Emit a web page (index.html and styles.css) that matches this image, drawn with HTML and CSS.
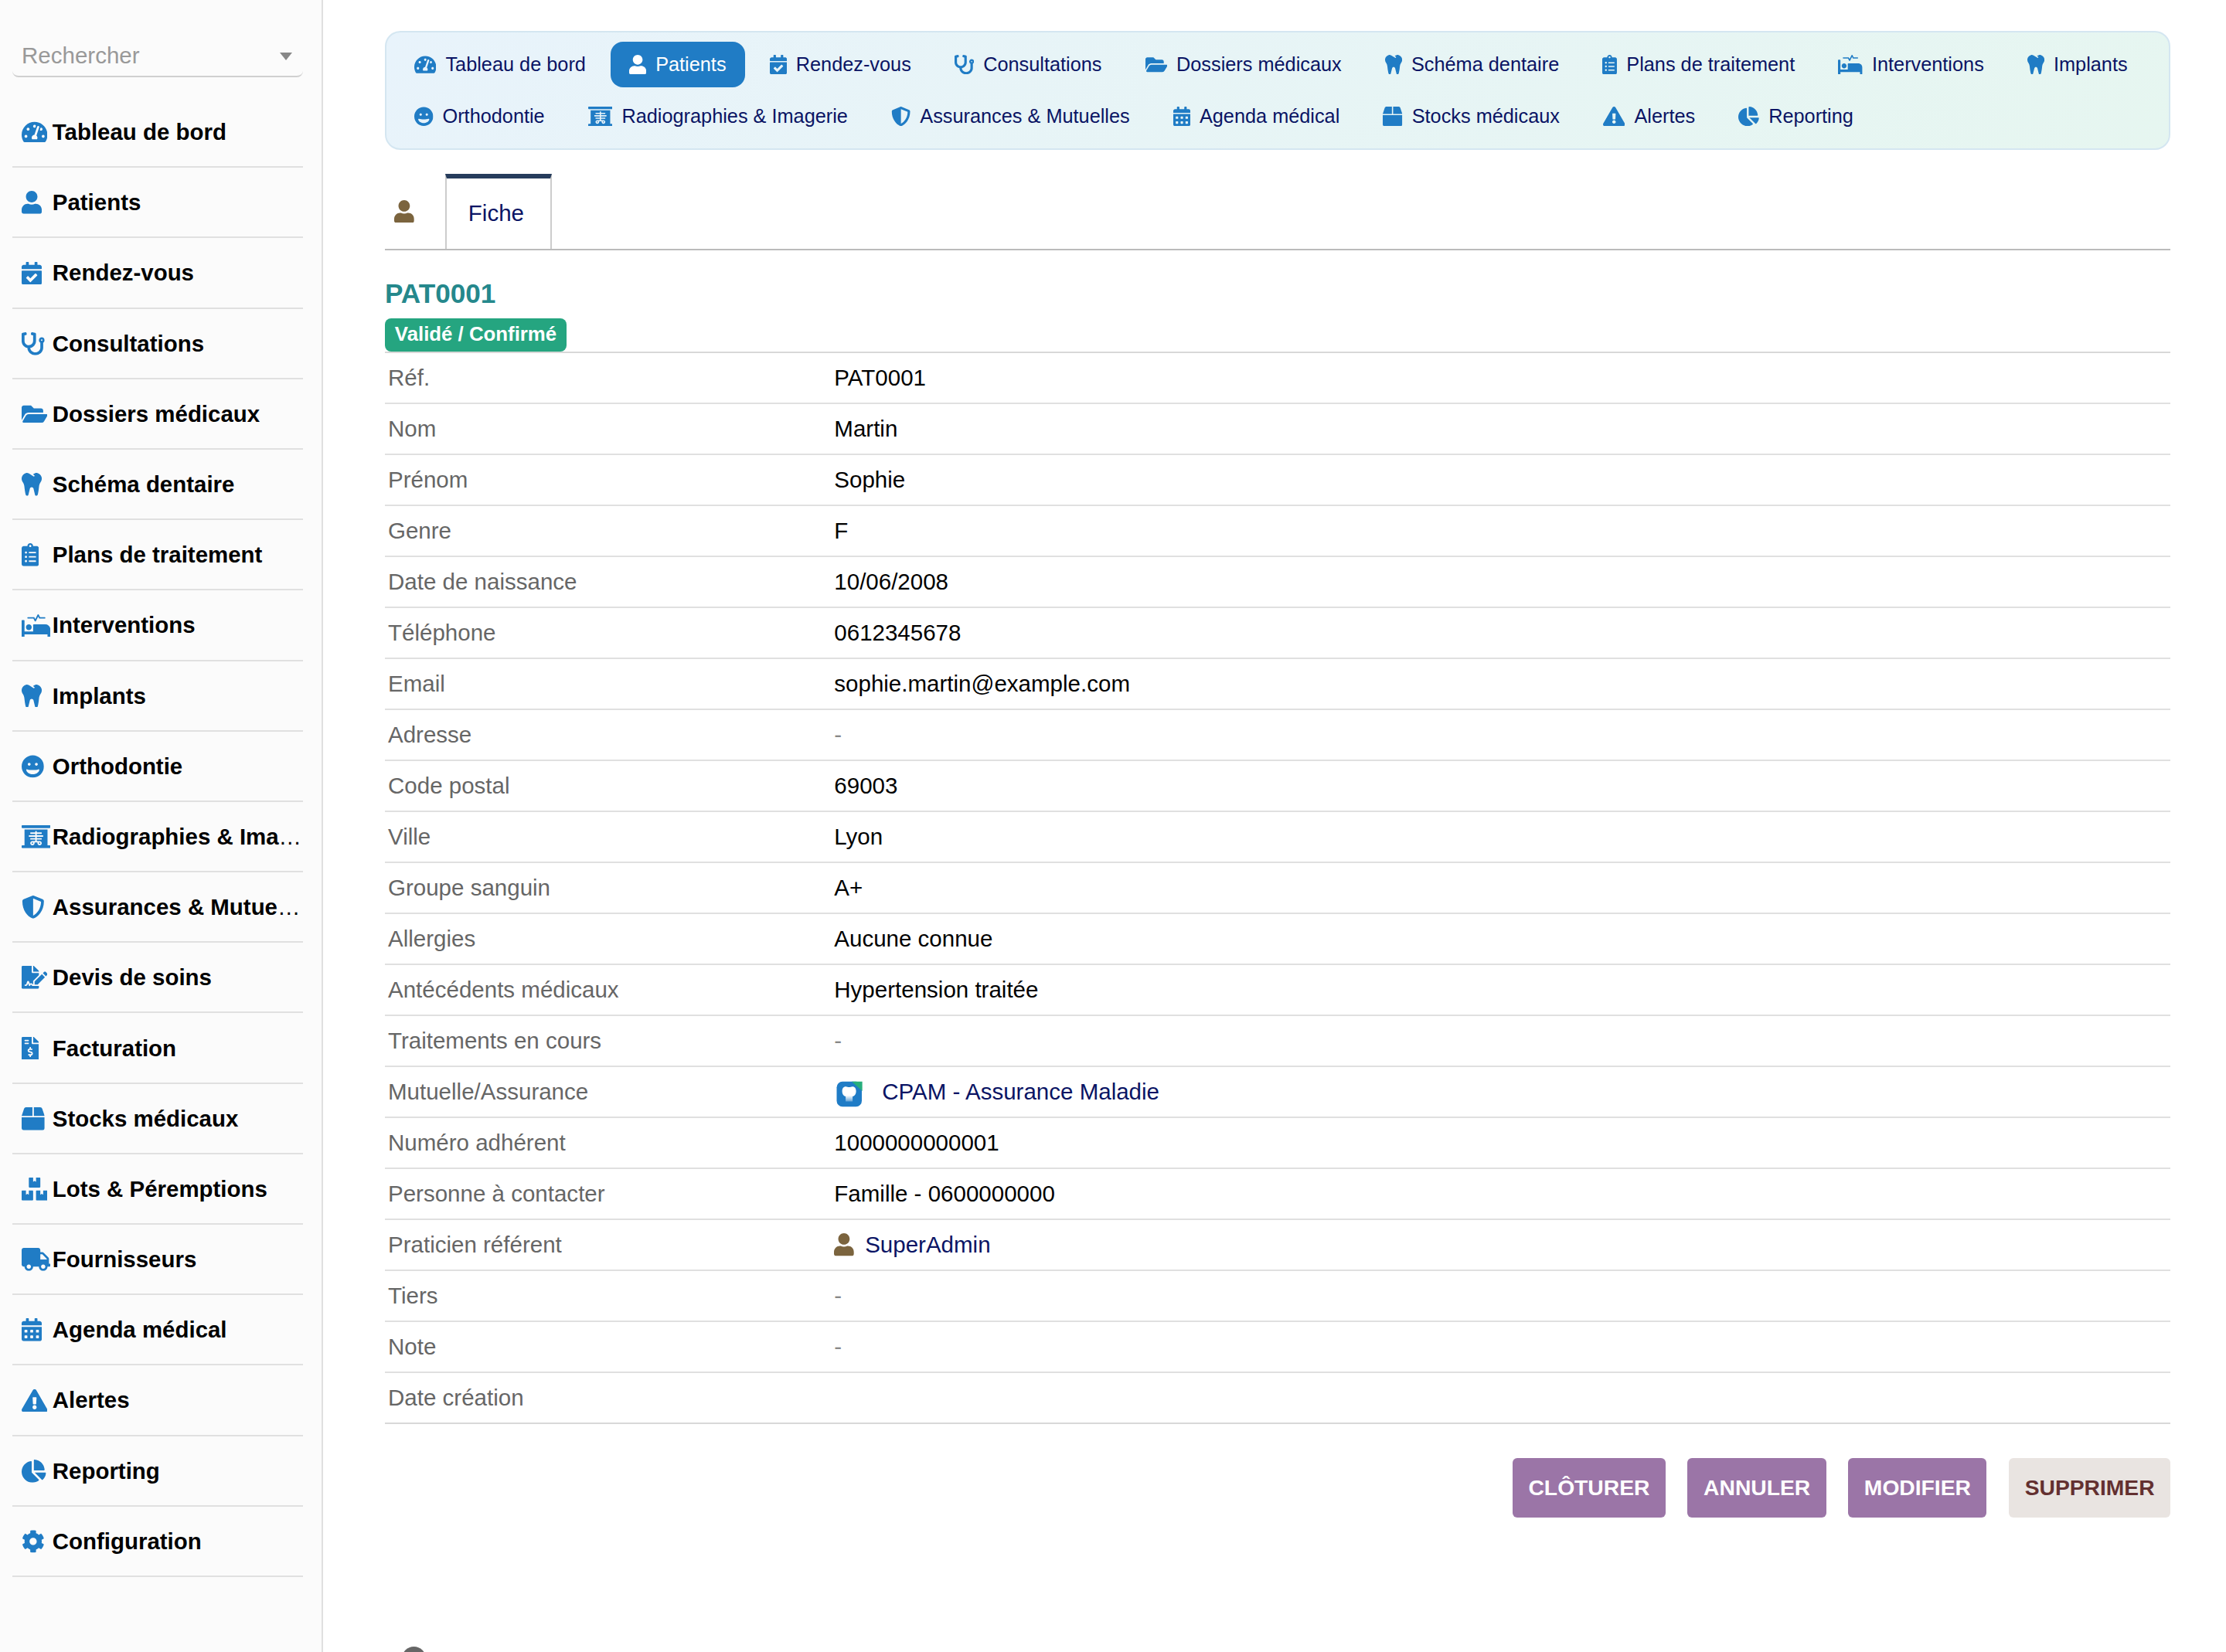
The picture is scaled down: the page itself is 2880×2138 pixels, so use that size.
FILE: index.html
```html
<!DOCTYPE html>
<html lang="fr">
<head>
<meta charset="utf-8">
<title>PAT0001 - Patient</title>
<link rel="stylesheet" href="styles.css">
</head>
<body>
<svg class="sprite" aria-hidden="true">
  <symbol id="gauge" viewBox="0 0 576 512"><path d="M288 32C128.94 32 0 160.94 0 320c0 52.8 14.25 102.26 39.06 144.8 5.61 9.62 16.3 15.2 27.44 15.2h443c11.14 0 21.83-5.58 27.44-15.2C561.75 422.26 576 372.8 576 320c0-159.06-128.94-288-288-288zm0 64c14.71 0 26.58 10.13 30.32 23.65-1.11 2.26-2.64 4.23-3.45 6.67l-9.22 27.67c-5.13 3.49-10.97 6.01-17.64 6.01-17.67 0-32-14.33-32-32S270.33 96 288 96zM96 384c-17.67 0-32-14.33-32-32s14.33-32 32-32 32 14.33 32 32-14.33 32-32 32zm48-160c-17.67 0-32-14.33-32-32s14.33-32 32-32 32 14.33 32 32-14.33 32-32 32zm246.77-72.41l-61.33 184C343.13 347.33 352 364.54 352 384c0 11.72-3.38 22.55-8.88 32H232.88c-5.5-9.45-8.88-20.28-8.88-32 0-33.94 26.5-61.43 59.9-63.59l61.34-184.01c4.17-12.56 17.73-19.45 30.36-15.17 12.57 4.19 19.35 17.79 15.17 30.36zm14.66 57.2l15.52-46.55c3.47-1.29 7.13-2.23 11.05-2.23 17.67 0 32 14.33 32 32s-14.33 32-32 32c-11.38-.01-20.89-6.28-26.57-15.22zM480 384c-17.67 0-32-14.33-32-32s14.33-32 32-32 32 14.33 32 32-14.33 32-32 32z"/></symbol>
  <symbol id="user" viewBox="0 0 448 512"><path d="M224 256c70.7 0 128-57.3 128-128S294.7 0 224 0 96 57.3 96 128s57.3 128 128 128zm89.6 32h-16.7c-22.2 10.2-46.9 16-72.9 16s-50.6-5.8-72.9-16h-16.7C60.2 288 0 348.2 0 422.4V464c0 26.5 21.5 48 48 48h352c26.5 0 48-21.5 48-48v-41.6c0-74.2-60.2-134.4-134.4-134.4z"/></symbol>
  <symbol id="check" viewBox="0 0 448 512"><path d="M436 160H12c-6.627 0-12-5.373-12-12v-36c0-26.51 21.49-48 48-48h48V12c0-6.627 5.373-12 12-12h40c6.627 0 12 5.373 12 12v52h128V12c0-6.627 5.373-12 12-12h40c6.627 0 12 5.373 12 12v52h48c26.51 0 48 21.49 48 48v36c0 6.627-5.373 12-12 12zM12 192h424c6.627 0 12 5.373 12 12v260c0 26.51-21.49 48-48 48H48c-26.51 0-48-21.49-48-48V204c0-6.627 5.373-12 12-12zm333.296 95.947l-28.169-28.398c-4.667-4.705-12.265-4.736-16.97-.068L194.12 364.665l-45.98-46.352c-4.667-4.705-12.266-4.736-16.971-.068l-28.397 28.17c-4.705 4.667-4.736 12.265-.068 16.97l82.601 83.269c4.667 4.705 12.265 4.736 16.97.068l142.953-141.805c4.705-4.667 4.736-12.265.068-16.97z"/></symbol>
  <symbol id="stetho" viewBox="0 0 512 512"><path d="M447.1 112c-34.2.5-62.3 28.4-63 62.6-.5 24.3 12.5 45.6 32 56.8V344c0 57.3-50.2 104-112 104-60 0-109.2-44.1-111.9-99.2C265 333.8 320 269.2 320 192V36.6c0-11.4-8.1-21.3-19.3-23.5L237.8.5c-13-2.6-25.6 5.8-28.2 18.8L206.4 35c-2.6 13 5.8 25.6 18.8 28.2l30.7 6.1v121.4c0 52.9-42.2 96.7-95.1 97.2-53.4.5-96.9-42.7-96.9-96V69.4l30.7-6.1c13-2.6 21.4-15.2 18.8-28.2l-3.1-15.7C107.7 6.4 95.1-2 82.1.6L19.3 13C8.1 15.3 0 25.1 0 36.6V192c0 77.3 55.1 142 128.1 156.8C130.7 439.2 208.6 512 304 512c97 0 176-75.4 176-168V231.4c19.1-11.1 32-31.7 32-55.4 0-35.7-29.2-64.5-64.9-64zm.9 80c-8.8 0-16-7.2-16-16s7.2-16 16-16 16 7.2 16 16-7.2 16-16 16z"/></symbol>
  <symbol id="folder" viewBox="0 0 576 512"><path d="M572.694 292.093L500.27 416.248A63.997 63.997 0 0 1 444.989 448H45.025c-18.523 0-30.064-20.093-20.731-36.093l72.424-124.155A64 64 0 0 1 152 256h399.964c18.523 0 30.064 20.093 20.73 36.093zM152 224h328v-48c0-26.51-21.49-48-48-48H272l-64-64H48C21.49 64 0 85.49 0 112v278.046l69.077-118.418C86.214 242.25 117.989 224 152 224z"/></symbol>
  <symbol id="tooth" viewBox="0 0 448 512"><path d="M443.98 96.25c-11.01-45.22-47.11-82.06-92.01-93.72-32.19-8.36-63 5.1-89.14 24.33-3.25 2.39-6.96 3.73-10.5 5.48l28.32 18.21c7.42 4.77 9.58 14.67 4.8 22.11-4.46 6.95-14.27 9.86-22.11 4.8L162.83 12.84c-20.7-10.85-43.38-16.4-66.81-10.31-44.9 11.67-81 48.5-92.01 93.72-10.13 41.62-.42 80.81 21.5 110.43 23.36 31.57 32.68 68.66 36.29 107.35 4.4 47.16 10.33 94.16 20.94 140.32l7.8 33.95c3.19 13.87 15.49 23.7 29.67 23.7 13.97 0 26.15-9.55 29.54-23.16l34.47-138.42c4.56-18.32 20.96-31.16 39.76-31.16s35.2 12.85 39.76 31.16l34.47 138.42c3.39 13.61 15.57 23.16 29.54 23.16 14.18 0 26.48-9.83 29.67-23.7l7.8-33.95c10.61-46.15 16.53-93.16 20.94-140.32 3.61-38.7 12.93-75.78 36.29-107.35 21.95-29.61 31.66-68.8 21.53-110.43z"/></symbol>
  <symbol id="clip" viewBox="0 0 384 512"><path d="M336 64h-80c0-35.3-28.7-64-64-64s-64 28.7-64 64H48C21.5 64 0 85.5 0 112v352c0 26.5 21.5 48 48 48h288c26.5 0 48-21.5 48-48V112c0-26.5-21.5-48-48-48zM96 424c-13.3 0-24-10.7-24-24s10.7-24 24-24 24 10.7 24 24-10.7 24-24 24zm0-96c-13.3 0-24-10.7-24-24s10.7-24 24-24 24 10.7 24 24-10.7 24-24 24zm0-96c-13.3 0-24-10.7-24-24s10.7-24 24-24 24 10.7 24 24-10.7 24-24 24zm96-192c13.3 0 24 10.7 24 24s-10.7 24-24 24-24-10.7-24-24 10.7-24 24-24zm128 368c0 4.4-3.6 8-8 8H168c-4.4 0-8-3.6-8-8v-16c0-4.4 3.6-8 8-8h144c4.4 0 8 3.6 8 8v16zm0-96c0 4.4-3.6 8-8 8H168c-4.4 0-8-3.6-8-8v-16c0-4.4 3.6-8 8-8h144c4.4 0 8 3.6 8 8v16zm0-96c0 4.4-3.6 8-8 8H168c-4.4 0-8-3.6-8-8v-16c0-4.4 3.6-8 8-8h144c4.4 0 8 3.6 8 8v16z"/></symbol>
  <symbol id="bed" viewBox="0 0 640 512"><path d="M528 224H272c-8.8 0-16 7.2-16 16v144H64V144c0-8.8-7.2-16-16-16H16c-8.8 0-16 7.2-16 16v352c0 8.8 7.2 16 16 16h32c8.8 0 16-7.2 16-16v-48h512v48c0 8.8 7.2 16 16 16h32c8.8 0 16-7.2 16-16V336c0-61.9-50.1-112-112-112zM136 96h126.1l27.6 55.2c5.9 11.8 22.7 11.8 28.6 0L368 51.8 390.1 96H512c8.8 0 16-7.2 16-16s-7.2-16-16-16H409.9L382.3 8.8C376.4-3 359.6-3 353.7 8.8L304 108.2l-19.9-39.8c-1.4-2.7-4.1-4.4-7.2-4.4H136c-4.4 0-8 3.6-8 8v16c0 4.4 3.6 8 8 8zm24 256c35.3 0 64-28.7 64-64s-28.7-64-64-64-64 28.7-64 64 28.7 64 64 64z"/></symbol>
  <symbol id="grin" viewBox="0 0 496 512"><path d="M248 8C111 8 0 119 0 256s111 248 248 248 248-111 248-248S385 8 248 8zm80 168c17.7 0 32 14.3 32 32s-14.3 32-32 32-32-14.3-32-32 14.3-32 32-32zm-160 0c17.7 0 32 14.3 32 32s-14.3 32-32 32-32-14.3-32-32 14.3-32 32-32zm80 256c-60.6 0-134.5-38.3-143.8-93.3-2-11.8 9.3-21.6 20.7-17.9C155.1 330.5 200 336 248 336s92.9-5.5 123.1-15.2c11.3-3.7 22.6 6.1 20.7 17.9-9.3 55-83.2 93.3-143.8 93.3z"/></symbol>
  <symbol id="xray" viewBox="0 0 640 512"><path d="M240 384c-8.8 0-16 7.2-16 16s7.2 16 16 16 16-7.2 16-16-7.2-16-16-16zm160 32c8.8 0 16-7.2 16-16s-7.2-16-16-16-16 7.2-16 16 7.2 16 16 16zM624 0H16C7.2 0 0 7.2 0 16v32c0 8.8 7.2 16 16 16h608c8.8 0 16-7.2 16-16V16c0-8.8-7.2-16-16-16zm0 448h-48V96H64v352H16c-8.8 0-16 7.2-16 16v32c0 8.8 7.2 16 16 16h608c8.8 0 16-7.2 16-16v-32c0-8.8-7.2-16-16-16zM480 248c0 4.4-3.6 8-8 8H336v32h104c4.4 0 8 3.6 8 8v16c0 4.4-3.6 8-8 8H336v32h64c26.5 0 48 21.5 48 48s-21.5 48-48 48-48-21.5-48-48v-16h-64v16c0 26.5-21.5 48-48 48s-48-21.5-48-48 21.5-48 48-48h64v-32H200c-4.4 0-8-3.6-8-8v-16c0-4.4 3.6-8 8-8h104v-32H168c-4.4 0-8-3.6-8-8v-16c0-4.4 3.6-8 8-8h136v-32H200c-4.4 0-8-3.6-8-8v-16c0-4.4 3.6-8 8-8h104v-24c0-4.4 3.6-8 8-8h16c4.4 0 8 3.6 8 8v24h104c4.4 0 8 3.6 8 8v16c0 4.4-3.6 8-8 8H336v32h136c4.4 0 8 3.6 8 8v16z"/></symbol>
  <symbol id="shield" viewBox="0 0 512 512"><path d="M466.5 83.7l-192-80a48.15 48.15 0 0 0-36.9 0l-192 80C27.7 91.1 16 108.6 16 128c0 198.5 114.5 335.7 221.5 380.3 11.8 4.9 25.1 4.9 36.9 0C360.1 472.6 496 349.3 496 128c0-19.4-11.7-36.9-29.5-44.3zM256.1 446.3l-.1-381 175.9 73.3c-3.3 151.4-82.1 261.1-175.8 307.7z"/></symbol>
  <symbol id="sign" viewBox="0 0 576 512"><path d="M218.17 424.14c-2.95-5.92-8.09-6.52-10.17-6.52s-7.22.59-10.02 6.19l-7.67 15.34c-6.37 12.78-25.03 11.37-29.48-2.09L144 386.59l-10.61 31.88c-5.89 17.66-22.38 29.53-41 29.53H80c-8.84 0-16-7.16-16-16s7.16-16 16-16h12.39c4.83 0 9.11-3.08 10.64-7.66l18.19-54.64c3.3-9.81 12.44-16.41 22.78-16.41s19.48 6.59 22.77 16.41l13.88 41.64c19.75-16.19 54.06-9.7 66 14.16 1.89 3.78 5.49 5.95 9.36 6.26v-82.12l128-127.09V160H248c-13.2 0-24-10.8-24-24V0H24C10.7 0 0 10.7 0 24v464c0 13.3 10.7 24 24 24h336c13.3 0 24-10.7 24-24v-40l-128-.11c-16.12-.31-30.58-9.28-37.83-23.75zM384 121.9c0-6.3-2.5-12.4-7-16.9L279.1 7c-4.5-4.5-10.6-7-17-7H256v128h128v-6.1zm-96 225.06V416h68.99l161.68-162.78-67.88-67.88L288 346.96zm280.54-179.63l-31.87-31.87c-9.94-9.94-26.07-9.94-36.01 0l-27.25 27.25 67.88 67.88 27.25-27.25c9.95-9.94 9.95-26.07 0-36.01z"/></symbol>
  <symbol id="invoice" viewBox="0 0 384 512"><path d="M377 105L279.1 7c-4.5-4.5-10.6-7-17-7H256v128h128v-6.1c0-6.3-2.5-12.4-7-16.9zm-153 31V0H24C10.7 0 0 10.7 0 24v464c0 13.3 10.7 24 24 24h336c13.3 0 24-10.7 24-24V160H248c-13.2 0-24-10.8-24-24zM64 72c0-4.42 3.58-8 8-8h80c4.42 0 8 3.58 8 8v16c0 4.42-3.58 8-8 8H72c-4.42 0-8-3.58-8-8V72zm0 80v-16c0-4.42 3.58-8 8-8h80c4.42 0 8 3.58 8 8v16c0 4.42-3.58 8-8 8H72c-4.42 0-8-3.58-8-8zm144 263.88V440c0 4.42-3.58 8-8 8h-16c-4.42 0-8-3.58-8-8v-24.29c-11.29-.58-22.27-4.52-31.37-11.35-3.9-2.93-4.1-8.77-.57-12.14l11.75-11.21c2.77-2.64 6.89-2.76 10.13-.73 3.87 2.42 8.26 3.72 12.82 3.72h28.11c6.5 0 11.8-5.92 11.8-13.19 0-5.95-3.61-11.19-8.77-12.73l-45-13.5c-18.59-5.58-31.58-23.42-31.58-43.39 0-24.52 19.05-44.44 42.67-45.07V232c0-4.42 3.58-8 8-8h16c4.42 0 8 3.58 8 8v24.29c11.29.58 22.27 4.51 31.37 11.35 3.9 2.93 4.1 8.77.57 12.14l-11.75 11.21c-2.77 2.64-6.89 2.76-10.13.73-3.87-2.43-8.26-3.72-12.82-3.72h-28.11c-6.5 0-11.8 5.92-11.8 13.19 0 5.95 3.61 11.19 8.77 12.73l45 13.5c18.59 5.58 31.58 23.42 31.58 43.39 0 24.53-19.05 44.44-42.67 45.07z"/></symbol>
  <symbol id="box" viewBox="0 0 512 512"><path d="M509.5 184.6L458.9 32.8C452.4 13.2 434.1 0 413.4 0H272v192h238.7c-.4-2.5-.4-5-1.2-7.4zM240 0H98.6c-20.7 0-39 13.2-45.5 32.8L2.5 184.6c-.8 2.4-.8 4.9-1.2 7.4H240V0zM0 224v240c0 26.5 21.5 48 48 48h416c26.5 0 48-21.5 48-48V224H0z"/></symbol>
  <symbol id="boxes" viewBox="0 0 576 512"><path d="M560 288h-80v96l-32-21.3-32 21.3v-96h-80c-8.8 0-16 7.2-16 16v192c0 8.8 7.2 16 16 16h224c8.8 0 16-7.2 16-16V304c0-8.8-7.2-16-16-16zm-384-64h224c8.8 0 16-7.2 16-16V16c0-8.8-7.2-16-16-16h-80v96l-32-21.3L256 96V0h-80c-8.8 0-16 7.2-16 16v192c0 8.8 7.2 16 16 16zm64 64h-80v96l-32-21.3L96 384v-96H16c-8.8 0-16 7.2-16 16v192c0 8.8 7.2 16 16 16h224c8.8 0 16-7.2 16-16V304c0-8.8-7.2-16-16-16z"/></symbol>
  <symbol id="truck" viewBox="0 0 640 512"><path d="M624 352h-16V243.9c0-12.7-5.1-24.9-14.1-33.9L494 110.1c-9-9-21.2-14.1-33.9-14.1H416V48c0-26.5-21.5-48-48-48H48C21.5 0 0 21.5 0 48v320c0 26.5 21.5 48 48 48h16c0 53 43 96 96 96s96-43 96-96h128c0 53 43 96 96 96s96-43 96-96h48c8.8 0 16-7.2 16-16v-32c0-8.8-7.2-16-16-16zM160 464c-26.5 0-48-21.5-48-48s21.5-48 48-48 48 21.5 48 48-21.5 48-48 48zm320 0c-26.5 0-48-21.5-48-48s21.5-48 48-48 48 21.5 48 48-21.5 48-48 48zm80-208H416V144h44.1l99.9 99.9V256z"/></symbol>
  <symbol id="calendar" viewBox="0 0 448 512"><path d="M0 464c0 26.5 21.5 48 48 48h352c26.5 0 48-21.5 48-48V192H0v272zm320-196c0-6.6 5.4-12 12-12h40c6.6 0 12 5.4 12 12v40c0 6.6-5.4 12-12 12h-40c-6.6 0-12-5.4-12-12v-40zm0 128c0-6.6 5.4-12 12-12h40c6.6 0 12 5.4 12 12v40c0 6.6-5.4 12-12 12h-40c-6.6 0-12-5.4-12-12v-40zM192 268c0-6.6 5.4-12 12-12h40c6.6 0 12 5.4 12 12v40c0 6.6-5.4 12-12 12h-40c-6.6 0-12-5.4-12-12v-40zm0 128c0-6.6 5.4-12 12-12h40c6.6 0 12 5.4 12 12v40c0 6.6-5.4 12-12 12h-40c-6.6 0-12-5.4-12-12v-40zM64 268c0-6.6 5.4-12 12-12h40c6.6 0 12 5.4 12 12v40c0 6.6-5.4 12-12 12H76c-6.6 0-12-5.4-12-12v-40zm0 128c0-6.6 5.4-12 12-12h40c6.6 0 12 5.4 12 12v40c0 6.6-5.4 12-12 12H76c-6.6 0-12-5.4-12-12v-40zM400 64h-48V16c0-8.8-7.2-16-16-16h-32c-8.8 0-16 7.2-16 16v48H160V16c0-8.8-7.2-16-16-16h-32c-8.8 0-16 7.2-16 16v48H48C21.5 64 0 85.5 0 112v48h448v-48c0-26.5-21.5-48-48-48z"/></symbol>
  <symbol id="warn" viewBox="0 0 576 512"><path d="M569.517 440.013C587.975 472.007 564.806 512 527.94 512H48.054c-36.937 0-59.999-40.055-41.577-71.987L246.423 23.985c18.467-32.009 64.72-31.951 83.154 0l239.94 416.028zM288 354c-25.405 0-46 20.595-46 46s20.595 46 46 46 46-20.595 46-46-20.595-46-46-46zm-43.673-165.346l7.418 136c.347 6.364 5.609 11.346 11.982 11.346h48.546c6.373 0 11.635-4.982 11.982-11.346l7.418-136c.375-6.874-5.098-12.654-11.982-12.654h-63.383c-6.884 0-12.356 5.78-11.981 12.654z"/></symbol>
  <symbol id="pie" viewBox="0 0 544 512"><path d="M527.79 288H290.5l158.03 158.03c6.04 6.04 15.98 6.53 22.19.68 38.7-36.46 65.32-85.61 73.13-140.86 1.34-9.46-6.51-17.85-16.06-17.85zm-15.83-64.8C503.72 103.74 408.26 8.28 288.8.04 279.68-.59 272 7.1 272 16.24V240h223.77c9.14 0 16.82-7.68 16.19-16.8zM224 288V50.71c0-9.55-8.39-17.4-17.84-16.06C86.99 51.49-4.1 155.6.14 280.37 4.5 408.51 114.83 513.59 243.03 511.98c50.4-.63 96.97-16.87 135.26-44.03 7.9-5.6 8.42-17.23 1.57-24.08L224 288z"/></symbol>
  <symbol id="cog" viewBox="0 0 512 512"><path d="M487.4 315.7l-42.6-24.6c4.3-23.2 4.3-47 0-70.2l42.6-24.6c4.9-2.8 7.1-8.6 5.5-14-11.1-35.6-30-67.8-54.7-94.6-3.8-4.1-10-5.1-14.8-2.3L380.8 110c-17.9-15.4-38.5-27.3-60.8-35.1V25.8c0-5.6-3.9-10.5-9.4-11.7-36.7-8.2-74.3-7.8-109.2 0-5.5 1.2-9.4 6.1-9.4 11.7V75c-22.2 7.9-42.8 19.8-60.8 35.1L88.7 85.5c-4.9-2.8-11-1.9-14.8 2.3-24.7 26.7-43.6 58.9-54.7 94.6-1.7 5.4.6 11.2 5.5 14L67.3 221c-4.3 23.2-4.3 47 0 70.2l-42.6 24.6c-4.9 2.8-7.1 8.6-5.5 14 11.1 35.6 30 67.8 54.7 94.6 3.8 4.1 10 5.1 14.8 2.3l42.6-24.6c17.9 15.4 38.5 27.3 60.8 35.1v49.2c0 5.6 3.9 10.5 9.4 11.7 36.7 8.2 74.3 7.8 109.2 0 5.5-1.2 9.4-6.1 9.4-11.7v-49.2c22.2-7.9 42.8-19.8 60.8-35.1l42.6 24.6c4.9 2.8 11 1.9 14.8-2.3 24.7-26.7 43.6-58.9 54.7-94.6 1.5-5.5-.7-11.3-5.6-14.1zM256 336c-44.1 0-80-35.9-80-80s35.9-80 80-80 80 35.9 80 80-35.9 80-80 80z"/></symbol>
</svg>

<aside class="sidebar">
  <div class="search"><span>Rechercher</span><i class="caret"></i></div>
  <ul class="menu">
    <li><span class="pic"><svg class="icon w576"><use href="#gauge"/></svg></span><span class="label"><b>Tableau de bord</b></span></li>
    <li><span class="pic"><svg class="icon w448"><use href="#user"/></svg></span><span class="label"><b>Patients</b></span></li>
    <li><span class="pic"><svg class="icon w448"><use href="#check"/></svg></span><span class="label"><b>Rendez-vous</b></span></li>
    <li><span class="pic"><svg class="icon"><use href="#stetho"/></svg></span><span class="label"><b>Consultations</b></span></li>
    <li><span class="pic"><svg class="icon w576"><use href="#folder"/></svg></span><span class="label"><b>Dossiers médicaux</b></span></li>
    <li><span class="pic"><svg class="icon w448"><use href="#tooth"/></svg></span><span class="label"><b>Schéma dentaire</b></span></li>
    <li><span class="pic"><svg class="icon w384"><use href="#clip"/></svg></span><span class="label"><b>Plans de traitement</b></span></li>
    <li><span class="pic"><svg class="icon w640"><use href="#bed"/></svg></span><span class="label"><b>Interventions</b></span></li>
    <li><span class="pic"><svg class="icon w448"><use href="#tooth"/></svg></span><span class="label"><b>Implants</b></span></li>
    <li><span class="pic"><svg class="icon w496"><use href="#grin"/></svg></span><span class="label"><b>Orthodontie</b></span></li>
    <li><span class="pic"><svg class="icon w640"><use href="#xray"/></svg></span><span class="label"><b>Radiographies &amp; Ima</b>…</span></li>
    <li><span class="pic"><svg class="icon"><use href="#shield"/></svg></span><span class="label"><b>Assurances &amp; Mutue</b>…</span></li>
    <li><span class="pic"><svg class="icon w576"><use href="#sign"/></svg></span><span class="label"><b>Devis de soins</b></span></li>
    <li><span class="pic"><svg class="icon w384"><use href="#invoice"/></svg></span><span class="label"><b>Facturation</b></span></li>
    <li><span class="pic"><svg class="icon"><use href="#box"/></svg></span><span class="label"><b>Stocks médicaux</b></span></li>
    <li><span class="pic"><svg class="icon w576"><use href="#boxes"/></svg></span><span class="label"><b>Lots &amp; Péremptions</b></span></li>
    <li><span class="pic"><svg class="icon w640"><use href="#truck"/></svg></span><span class="label"><b>Fournisseurs</b></span></li>
    <li><span class="pic"><svg class="icon w448"><use href="#calendar"/></svg></span><span class="label"><b>Agenda médical</b></span></li>
    <li><span class="pic"><svg class="icon w576"><use href="#warn"/></svg></span><span class="label"><b>Alertes</b></span></li>
    <li><span class="pic"><svg class="icon w544"><use href="#pie"/></svg></span><span class="label"><b>Reporting</b></span></li>
    <li><span class="pic"><svg class="icon"><use href="#cog"/></svg></span><span class="label"><b>Configuration</b></span></li>
  </ul>
</aside>

<main class="content">
  <nav class="topnav">
    <a><svg class="icon w576"><use href="#gauge"/></svg><span>Tableau de bord</span></a>
    <a class="active"><svg class="icon w448"><use href="#user"/></svg><span>Patients</span></a>
    <a><svg class="icon w448"><use href="#check"/></svg><span>Rendez-vous</span></a>
    <a><svg class="icon"><use href="#stetho"/></svg><span>Consultations</span></a>
    <a><svg class="icon w576"><use href="#folder"/></svg><span>Dossiers médicaux</span></a>
    <a><svg class="icon w448"><use href="#tooth"/></svg><span>Schéma dentaire</span></a>
    <a><svg class="icon w384"><use href="#clip"/></svg><span>Plans de traitement</span></a>
    <a><svg class="icon w640"><use href="#bed"/></svg><span>Interventions</span></a>
    <a><svg class="icon w448"><use href="#tooth"/></svg><span>Implants</span></a>
    <a><svg class="icon w496"><use href="#grin"/></svg><span>Orthodontie</span></a>
    <a><svg class="icon w640"><use href="#xray"/></svg><span>Radiographies &amp; Imagerie</span></a>
    <a><svg class="icon"><use href="#shield"/></svg><span>Assurances &amp; Mutuelles</span></a>
    <a><svg class="icon w448"><use href="#calendar"/></svg><span>Agenda médical</span></a>
    <a><svg class="icon"><use href="#box"/></svg><span>Stocks médicaux</span></a>
    <a><svg class="icon w576"><use href="#warn"/></svg><span>Alertes</span></a>
    <a><svg class="icon w544"><use href="#pie"/></svg><span>Reporting</span></a>
  </nav>

  <div class="tabs">
    <svg class="icon w448 person"><use href="#user"/></svg>
    <a class="tab">Fiche</a>
  </div>

  <h1 class="ref">PAT0001</h1>
  <span class="status">Validé / Confirmé</span>

  <dl class="fields">
    <div><dt>Réf.</dt><dd>PAT0001</dd></div>
    <div><dt>Nom</dt><dd>Martin</dd></div>
    <div><dt>Prénom</dt><dd>Sophie</dd></div>
    <div><dt>Genre</dt><dd>F</dd></div>
    <div><dt>Date de naissance</dt><dd>10/06/2008</dd></div>
    <div><dt>Téléphone</dt><dd>0612345678</dd></div>
    <div><dt>Email</dt><dd>sophie.martin@example.com</dd></div>
    <div><dt>Adresse</dt><dd class="none">-</dd></div>
    <div><dt>Code postal</dt><dd>69003</dd></div>
    <div><dt>Ville</dt><dd>Lyon</dd></div>
    <div><dt>Groupe sanguin</dt><dd>A+</dd></div>
    <div><dt>Allergies</dt><dd>Aucune connue</dd></div>
    <div><dt>Antécédents médicaux</dt><dd>Hypertension traitée</dd></div>
    <div><dt>Traitements en cours</dt><dd class="none">-</dd></div>
    <div><dt>Mutuelle/Assurance</dt><dd class="link"><svg class="logo" viewBox="0 0 34 34"><defs><linearGradient id="root" x1="0" y1="0" x2="0" y2="1"><stop offset=".6" stop-color="#fff"/><stop offset="1" stop-color="#fff" stop-opacity=".3"/></linearGradient></defs><rect x=".5" y=".8" width="32.500" height="32.500" rx="7.500" fill="#1f7cc6"/><path d="M20 .8h13.600V13z" fill="#27ae7c"/><path d="M12.300 7.200c1.800 0 2.700.8 4.300.8s2.500-.8 4.300-.8c3 0 4.700 2.200 4.700 5.900 0 4-1.700 6.500-4.500 6.900v6.500h-9v-6.500c-2.800-.4-4.500-2.900-4.500-6.900 0-3.700 1.700-5.900 4.700-5.900z" fill="url(#root)"/></svg>CPAM - Assurance Maladie</dd></div>
    <div><dt>Numéro adhérent</dt><dd>1000000000001</dd></div>
    <div><dt>Personne à contacter</dt><dd>Famille - 0600000000</dd></div>
    <div><dt>Praticien référent</dt><dd class="link"><svg class="icon w448 person"><use href="#user"/></svg>SuperAdmin</dd></div>
    <div><dt>Tiers</dt><dd class="none">-</dd></div>
    <div><dt>Note</dt><dd class="none">-</dd></div>
    <div><dt>Date création</dt><dd></dd></div>
  </dl>

  <div class="actions">
    <a class="btn">CLÔTURER</a>
    <a class="btn">ANNULER</a>
    <a class="btn">MODIFIER</a>
    <a class="btn delete">SUPPRIMER</a>
  </div>

  <div class="dot"></div>
</main>
</body>
</html>
```
FILE: styles.css
```css
* { box-sizing: border-box; }

body {
  margin: 0;
  height: 2138px;
  overflow: hidden;
  display: flex;
  background: #fff;
  color: #000;
  font: 29.52px/34px "Liberation Sans", Arial, sans-serif;
}

.sprite { display: none; }

.icon {
  width: 1em;
  height: 1em;
  flex: none;
  fill: #207cc5;
}
.w384 { width: .75em; }
.w448 { width: .875em; }
.w496 { width: .96875em; }
.w544 { width: 1.0625em; }
.w576 { width: 1.125em; }
.w640 { width: 1.25em; }
.person { fill: #7b643e; }

/* Left menu */
.sidebar {
  flex: none;
  width: 418px;
  padding: 42px 24px 0 16px;
  background: #fbfbfb;
  border-right: 2px solid #e0e0e0;
}
.search {
  height: 58px;
  padding: 3px 14px 0 12px;
  display: flex;
  align-items: center;
  justify-content: space-between;
  color: #999;
  border-bottom: 2px solid #d0d0d0;
  border-radius: 8px;
}
.caret {
  border: 8px solid transparent;
  border-top: 10px solid #888;
  border-bottom: 0;
  margin-top: 2px;
}
.menu {
  list-style: none;
  margin: 26px 0 0;
  padding: 0;
}
.menu li {
  height: 91.2px;
  padding: 1px 0 0 12px;
  display: flex;
  align-items: center;
  border-bottom: 2px solid #e0e0e0;
}
.pic {
  flex: none;
  width: 39.8px;
  display: flex;
  font-size: 29.76px;
}
.label {
  font-size: 29.45px;
  white-space: nowrap;
}

/* Main column */
.content {
  flex: 1;
  min-width: 0;
  padding: 40px 72px 0 80px;
}
.topnav {
  display: flex;
  flex-wrap: wrap;
  gap: 8px;
  padding: 12px;
  border: 2px solid #d4e6f1;
  border-radius: 20px;
  background: linear-gradient(135deg, #e8f3fb, #e6f6f0);
  font-size: 25.3px;
  color: #0a1464;
}
.topnav a {
  height: 59px;
  padding: 0 24px;
  display: flex;
  align-items: center;
  gap: 12px;
  border-radius: 16px;
  white-space: nowrap;
}
.topnav span { padding: 0 .1px 2px 0; }
.topnav .active { background: #207cc5; color: #fff; }
.topnav .active .icon { fill: #fff; }

.tabs {
  height: 99px;
  margin-top: 31px;
  padding-left: 12px;
  display: flex;
  align-items: center;
  border-bottom: 2px solid #bbb;
}
.tab {
  width: 138px;
  height: 97px;
  margin-left: 40px;
  padding-left: 28px;
  line-height: 89px;
  border: 2px solid #ccc;
  border-top: 6px solid #263c5c;
  border-bottom: 0;
  color: #0a1464;
}

.ref {
  margin: 36px 0 12px;
  font-size: 35.2px;
  line-height: 40px;
  color: #25888c;
}
.status {
  display: block;
  width: 235px;
  height: 43px;
  text-align: center;
  font-size: 25.8px;
  font-weight: bold;
  line-height: 40px;
  color: #fff;
  background: #25a580;
  border-radius: 8px;
}

.fields {
  margin: 0;
  border-top: 2px solid #d8d8d8;
}
.fields div {
  height: 66px;
  padding-left: 4px;
  display: flex;
  align-items: center;
  border-bottom: 2px solid #e0e0e0;
}
.fields div:last-child { border-color: #d8d8d8; }
.fields dt { width: 577.3px; color: #666; }
.fields dd {
  margin: 0;
  display: flex;
  align-items: center;
}
.fields .none { color: #888; }
.fields .link { color: #0a1464; }
.fields .person { margin: 0 14px 0 0; }
.logo {
  width: 34px;
  height: 34px;
  margin: 5px 25.5px 0 2.5px;
}

.actions {
  margin-top: 44px;
  display: flex;
  justify-content: flex-end;
  gap: 28.4px;
}
.btn {
  height: 77px;
  padding: 0 20.4px 0 20.9px;
  font-size: 28.25px;
  font-weight: bold;
  line-height: 77px;
  color: #fff;
  background: #9b75a7;
  border-radius: 6px;
}
.delete { color: #633030; background: #e9e4e1; }

.dot {
  width: 31px;
  height: 31px;
  margin: 167px 0 0 22px;
  border-radius: 50%;
  background: #666;
}
```
